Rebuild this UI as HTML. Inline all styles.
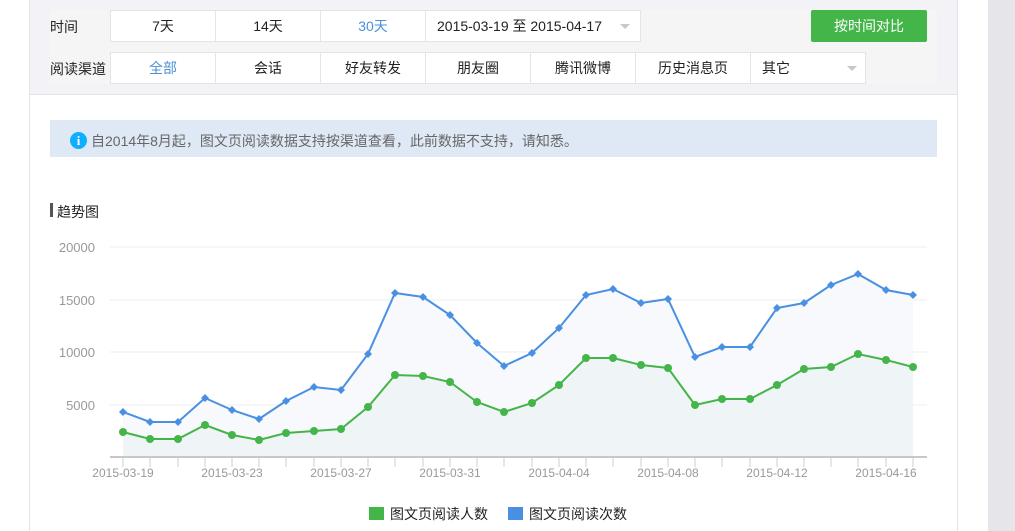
<!DOCTYPE html>
<html><head><meta charset="utf-8"><style>
body{margin:0;width:1015px;height:531px;overflow:hidden;background:#fff;font-family:"Liberation Sans","Noto Sans CJK SC",sans-serif;position:relative}
.a{position:absolute}
.btn{position:absolute;background:#fff;border:1px solid #e4e4e4;box-sizing:border-box;font-size:14px;color:#222;text-align:center;line-height:30px}
.lab{position:absolute;font-size:14px;color:#222}
.tri{position:absolute;width:0;height:0;border-left:5px solid transparent;border-right:5px solid transparent;border-top:5px solid #c8c8c8}
</style></head><body>
<div class="a" style="left:29px;top:0;width:929px;height:531px;border-left:1px solid #e4e4e8;border-right:1px solid #e4e4e8;box-sizing:border-box"></div>
<div class="a" style="left:30px;top:0;width:927px;height:94px;background:#f3f3f7;border-bottom:1px solid #e4e4e8"></div>
<div class="a" style="left:50px;top:10px;width:887px;height:74px;background:#f5f5f5"></div>
<div class="a" style="left:988px;top:0;width:27px;height:531px;background:#e6e6ea"></div>

<div class="lab" style="left:50px;top:17px">时间</div>
<div class="btn" style="left:110px;top:10px;width:106px;height:32px">7天</div>
<div class="btn" style="left:215px;top:10px;width:106px;height:32px">14天</div>
<div class="btn" style="left:320px;top:10px;width:106px;height:32px;color:#4a90d9">30天</div>
<div class="btn" style="left:425px;top:10px;width:216px;height:32px;text-align:left;padding-left:11px">2015-03-19 至 2015-04-17</div>
<div class="tri" style="left:620px;top:24px"></div>
<div class="a" style="left:811px;top:10px;width:116px;height:32px;background:#44b549;border-radius:2px;color:#fff;font-size:14px;text-align:center;line-height:32px">按时间对比</div>

<div class="lab" style="left:50px;top:59px">阅读渠道</div>
<div class="btn" style="left:110px;top:52px;width:106px;height:32px;color:#4a90d9">全部</div>
<div class="btn" style="left:215px;top:52px;width:106px;height:32px">会话</div>
<div class="btn" style="left:320px;top:52px;width:106px;height:32px">好友转发</div>
<div class="btn" style="left:425px;top:52px;width:106px;height:32px">朋友圈</div>
<div class="btn" style="left:530px;top:52px;width:106px;height:32px">腾讯微博</div>
<div class="btn" style="left:635px;top:52px;width:116px;height:32px">历史消息页</div>
<div class="btn" style="left:750px;top:52px;width:116px;height:32px;text-align:left;padding-left:11px">其它</div>
<div class="tri" style="left:847px;top:66px"></div>

<div class="a" style="left:50px;top:120px;width:887px;height:37px;background:#dfe9f5"></div>
<div class="a" style="left:70px;top:132px;width:17px;height:17px;border-radius:50%;background:#10aeff;color:#fff;font-weight:bold;font-size:13px;text-align:center;line-height:17px;font-family:'Liberation Serif',serif">i</div>
<div class="a" style="left:91px;top:131px;font-size:14px;color:#666">自2014年8月起，图文页阅读数据支持按渠道查看，此前数据不支持，请知悉。</div>

<div class="a" style="left:50px;top:203px;width:3px;height:14px;background:#555"></div>
<div class="a" style="left:57px;top:202px;font-size:14px;color:#222">趋势图</div>

<svg class="a" style="left:0;top:0" width="1015" height="531">
<g stroke="#eeeeee" stroke-width="1">
<line x1="110" y1="247" x2="927" y2="247"/><line x1="110" y1="300" x2="927" y2="300"/><line x1="110" y1="352" x2="927" y2="352"/><line x1="110" y1="405" x2="927" y2="405"/></g>
<g font-size="13" fill="#999" text-anchor="end" font-family="Liberation Sans,sans-serif">
<text x="95" y="252">20000</text><text x="95" y="305">15000</text><text x="95" y="357">10000</text><text x="95" y="410">5000</text></g>
<polygon fill="#f7f9fc" points="123,457 123,412 150,422 178,422 205,398 232,410 259,419 286,401 314,387 341,390 368,354 395,293 423,297 450,315 477,343 504,366 532,353 559,328 586,295 613,289 641,303 668,299 695,357 722,347 750,347 777,308 804,303 831,285 858,274 886,290 913,295 913,457"/>
<polygon fill="#eff4f7" points="123,457 123,432 150,439 178,439 205,425 232,435 259,440 286,433 314,431 341,429 368,407 395,375 423,376 450,382 477,402 504,412 532,403 559,385 586,358 613,358 641,365 668,368 695,405 722,399 750,399 777,385 804,369 831,367 858,354 886,360 913,367 913,457"/>
<line x1="110" y1="457" x2="927" y2="457" stroke="#c8c8c8" stroke-width="2"/>
<g stroke="#c8d0dc" stroke-width="1">
<path d="M123 458v9M150 458v9M178 458v9M205 458v9M232 458v9M259 458v9M286 458v9M314 458v9M341 458v9M368 458v9M395 458v9M423 458v9M450 458v9M477 458v9M504 458v9M532 458v9M559 458v9M586 458v9M613 458v9M641 458v9M668 458v9M695 458v9M722 458v9M750 458v9M777 458v9M804 458v9M831 458v9M858 458v9M886 458v9M913 458v9"/></g>
<g font-size="12" fill="#999" text-anchor="middle" font-family="Liberation Sans,sans-serif">
<text x="123" y="477">2015-03-19</text><text x="232" y="477">2015-03-23</text><text x="341" y="477">2015-03-27</text><text x="450" y="477">2015-03-31</text><text x="559" y="477">2015-04-04</text><text x="668" y="477">2015-04-08</text><text x="777" y="477">2015-04-12</text><text x="886" y="477">2015-04-16</text></g>
<polyline fill="none" stroke="#4a90e2" stroke-width="2" points="123,412 150,422 178,422 205,398 232,410 259,419 286,401 314,387 341,390 368,354 395,293 423,297 450,315 477,343 504,366 532,353 559,328 586,295 613,289 641,303 668,299 695,357 722,347 750,347 777,308 804,303 831,285 858,274 886,290 913,295"/>
<polyline fill="none" stroke="#44b549" stroke-width="2" points="123,432 150,439 178,439 205,425 232,435 259,440 286,433 314,431 341,429 368,407 395,375 423,376 450,382 477,402 504,412 532,403 559,385 586,358 613,358 641,365 668,368 695,405 722,399 750,399 777,385 804,369 831,367 858,354 886,360 913,367"/>
<g fill="#4a90e2">
<path d="M123 408l4 4-4 4-4-4zM150 418l4 4-4 4-4-4zM178 418l4 4-4 4-4-4zM205 394l4 4-4 4-4-4zM232 406l4 4-4 4-4-4zM259 415l4 4-4 4-4-4zM286 397l4 4-4 4-4-4zM314 383l4 4-4 4-4-4zM341 386l4 4-4 4-4-4zM368 350l4 4-4 4-4-4zM395 289l4 4-4 4-4-4zM423 293l4 4-4 4-4-4zM450 311l4 4-4 4-4-4zM477 339l4 4-4 4-4-4zM504 362l4 4-4 4-4-4zM532 349l4 4-4 4-4-4zM559 324l4 4-4 4-4-4zM586 291l4 4-4 4-4-4zM613 285l4 4-4 4-4-4zM641 299l4 4-4 4-4-4zM668 295l4 4-4 4-4-4zM695 353l4 4-4 4-4-4zM722 343l4 4-4 4-4-4zM750 343l4 4-4 4-4-4zM777 304l4 4-4 4-4-4zM804 299l4 4-4 4-4-4zM831 281l4 4-4 4-4-4zM858 270l4 4-4 4-4-4zM886 286l4 4-4 4-4-4zM913 291l4 4-4 4-4-4z"/></g>
<g fill="#44b549">
<circle cx="123" cy="432" r="4"/><circle cx="150" cy="439" r="4"/><circle cx="178" cy="439" r="4"/><circle cx="205" cy="425" r="4"/><circle cx="232" cy="435" r="4"/><circle cx="259" cy="440" r="4"/><circle cx="286" cy="433" r="4"/><circle cx="314" cy="431" r="4"/><circle cx="341" cy="429" r="4"/><circle cx="368" cy="407" r="4"/><circle cx="395" cy="375" r="4"/><circle cx="423" cy="376" r="4"/><circle cx="450" cy="382" r="4"/><circle cx="477" cy="402" r="4"/><circle cx="504" cy="412" r="4"/><circle cx="532" cy="403" r="4"/><circle cx="559" cy="385" r="4"/><circle cx="586" cy="358" r="4"/><circle cx="613" cy="358" r="4"/><circle cx="641" cy="365" r="4"/><circle cx="668" cy="368" r="4"/><circle cx="695" cy="405" r="4"/><circle cx="722" cy="399" r="4"/><circle cx="750" cy="399" r="4"/><circle cx="777" cy="385" r="4"/><circle cx="804" cy="369" r="4"/><circle cx="831" cy="367" r="4"/><circle cx="858" cy="354" r="4"/><circle cx="886" cy="360" r="4"/><circle cx="913" cy="367" r="4"/></g>
<rect x="369" y="507" width="15" height="13" fill="#44b549"/>
<rect x="508" y="507" width="15" height="13" fill="#4a90e2"/>
<g font-size="14" fill="#222" font-family="Liberation Sans,Noto Sans CJK SC,sans-serif">
<text x="390" y="519">图文页阅读人数</text><text x="529" y="519">图文页阅读次数</text></g>
</svg>
</body></html>
